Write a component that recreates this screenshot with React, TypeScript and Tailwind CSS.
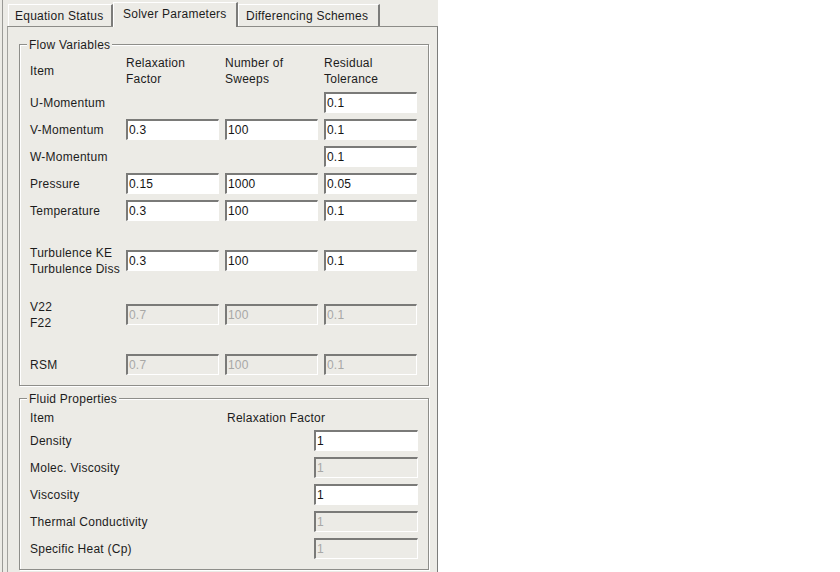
import React from "react";

type FlowRow = {
  label: string[];
  values: (string | null)[];
  disabled?: boolean;
  gap: string;
};

const flowRows: FlowRow[] = [
  { label: ["U-Momentum"], values: [null, null, "0.1"], gap: "mt-[5px]" },
  { label: ["V-Momentum"], values: ["0.3", "100", "0.1"], gap: "mt-[6px]" },
  { label: ["W-Momentum"], values: [null, null, "0.1"], gap: "mt-[6px]" },
  { label: ["Pressure"], values: ["0.15", "1000", "0.05"], gap: "mt-[6px]" },
  { label: ["Temperature"], values: ["0.3", "100", "0.1"], gap: "mt-[6px]" },
  { label: ["Turbulence KE", "Turbulence Diss"], values: ["0.3", "100", "0.1"], gap: "mt-[29px]" },
  { label: ["V22", "F22"], values: ["0.7", "100", "0.1"], disabled: true, gap: "mt-[33px]" },
  { label: ["RSM"], values: ["0.7", "100", "0.1"], disabled: true, gap: "mt-[29px]" },
];

const fluidRows = [
  { label: "Density", value: "1", disabled: false },
  { label: "Molec. Viscosity", value: "1", disabled: true },
  { label: "Viscosity", value: "1", disabled: false },
  { label: "Thermal Conductivity", value: "1", disabled: true },
  { label: "Specific Heat (Cp)", value: "1", disabled: true },
];

function Field({ value, disabled, wide }: { value: string; disabled?: boolean; wide?: boolean }) {
  return (
    <input
      readOnly
      value={value}
      className={`${wide ? "w-[104px]" : "w-[93px]"} h-[21px] shrink-0 border-t-2 border-l-2 border-b border-r border-t-[#7a7a78] border-l-[#7a7a78] border-b-white border-r-white pl-[1px] outline-none text-[12px] leading-[18px] tracking-[0.2px] ${
        disabled ? "bg-[#ecebe6] text-[#a8a8a6]" : "bg-white text-[#141414]"
      }`}
    />
  );
}

function Group({ title, className, children }: { title: string; className?: string; children: React.ReactNode }) {
  return (
    <div
      className={`relative border border-[#8e8e8a] shadow-[inset_1px_1px_0_#ffffff,1px_1px_0_#ffffff] pl-[10px] pr-[10px] ${className ?? ""}`}
    >
      <span className="absolute -top-[7px] left-[7px] bg-[#ecebe6] px-[2px] leading-[14px] text-[#1c1c1c]">
        {title}
      </span>
      {children}
    </div>
  );
}

function Tab({ label, active, className }: { label: string; active?: boolean; className: string }) {
  return (
    <div
      className={`flex items-center border-t border-l border-t-white border-l-white border-r-2 border-r-[#7c7c7a] bg-[#ecebe6] ${
        active ? "h-[25px] -mb-[1px] relative z-10 pb-[3px]" : "h-[22px]"
      } ${className}`}
    >
      {label}
    </div>
  );
}

export default function App() {
  return (
    <div className="w-[840px] h-[572px] bg-white overflow-hidden font-['Liberation_Sans',Arial,sans-serif] text-[12px] tracking-[0.25px] text-[#1c1c1c]">
      <div className="w-[438px] h-full bg-[#ecebe6] flex pl-[2px]">
        <div className="flex-1 flex border-l border-l-[#9a9a96] pl-[4px]">
          <div className="flex-1 flex flex-col">
            {/* tab strip */}
            <div className="h-[26px] flex items-end pl-[1px]">
              <Tab label="Equation Status" className="w-[105px] pl-[6px]" />
              <Tab label="Solver Parameters" active className="w-[125px] pl-[9px]" />
              <Tab label="Differencing Schemes" className="w-[142px] pl-[7px]" />
            </div>

            {/* tab page */}
            <div className="flex-1 border-l border-t border-r border-l-[#a2a29e] border-t-[#8c8c88] border-r-[#7c7c7a] pl-[11px] pr-[8px] pt-[17px]">
              <Group title="Flow Variables" className="pt-[10px] pb-[10px]">
                <div className="flex h-[32px] gap-[6px] leading-[16px]">
                  <div className="w-[90px] flex items-center">Item</div>
                  <div className="w-[93px]">Relaxation<br />Factor</div>
                  <div className="w-[93px]">Number of<br />Sweeps</div>
                  <div className="w-[93px]">Residual<br />Tolerance</div>
                </div>
                {flowRows.map((row) => (
                  <div key={row.label.join()} className={`flex items-center h-[21px] gap-[6px] ${row.gap}`}>
                    <div className="w-[90px] shrink-0 leading-[16px] whitespace-nowrap">
                      {row.label.map((l) => (
                        <div key={l}>{l}</div>
                      ))}
                    </div>
                    {row.values.map((v, i) =>
                      v === null ? (
                        <div key={i} className="w-[93px] shrink-0" />
                      ) : (
                        <Field key={i} value={v} disabled={row.disabled} />
                      )
                    )}
                  </div>
                ))}
              </Group>

              <Group title="Fluid Properties" className="mt-[12px] pt-[11px] pb-[10px]">
                <div className="flex h-[16px] leading-[16px]">
                  <div className="w-[197px]">Item</div>
                  <div>Relaxation Factor</div>
                </div>
                {fluidRows.map((row, i) => (
                  <div
                    key={row.label}
                    className={`flex items-center justify-between h-[21px] ${i === 0 ? "mt-[4px]" : "mt-[6px]"}`}
                  >
                    <div className="whitespace-nowrap">{row.label}</div>
                    <Field value={row.value} disabled={row.disabled} wide />
                  </div>
                ))}
              </Group>
            </div>
          </div>
        </div>
      </div>
    </div>
  );
}
